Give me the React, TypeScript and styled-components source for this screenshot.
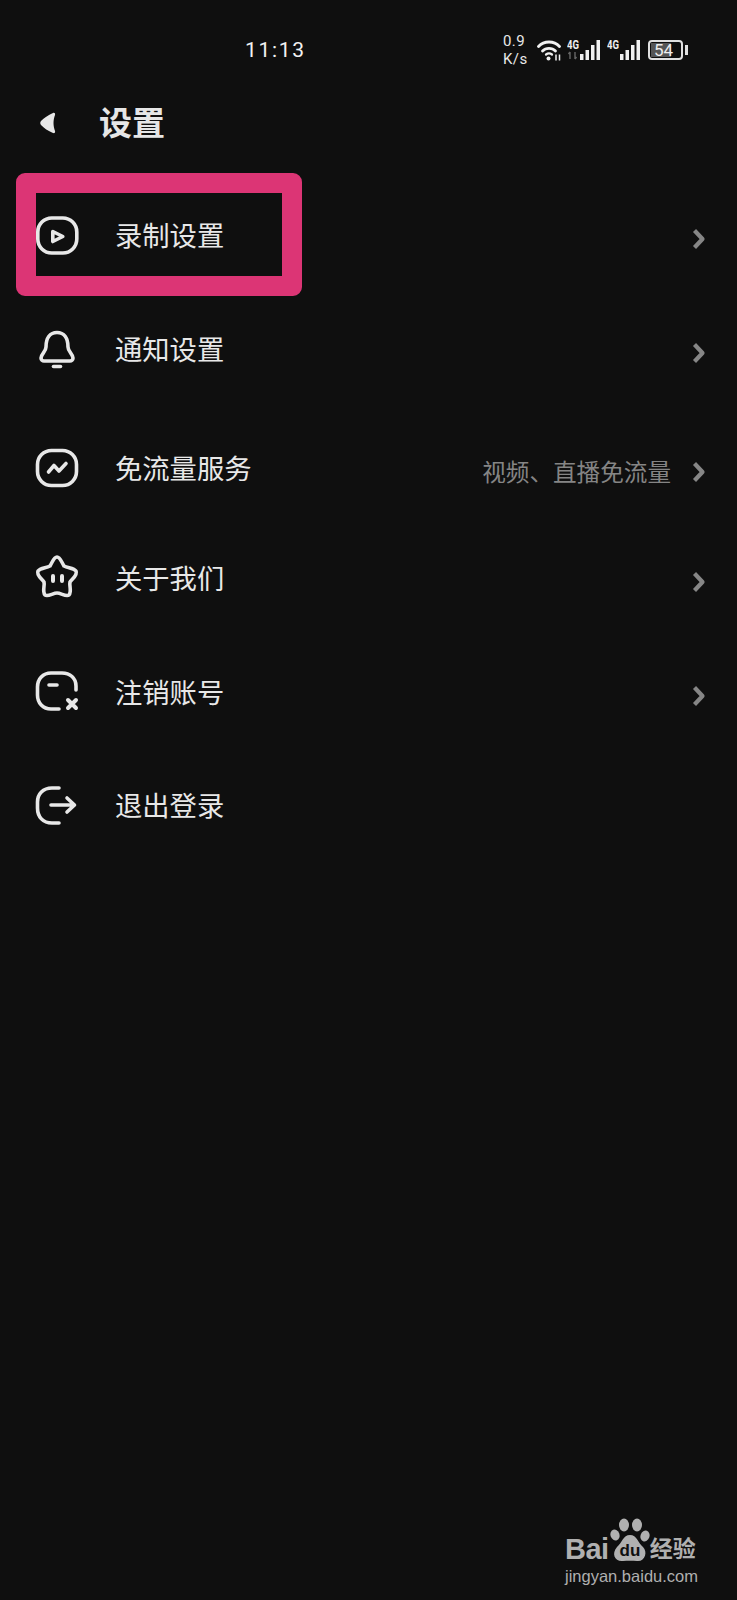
import { createGlobalStyle, styled } from 'styled-components';
import type { ReactNode } from 'react';

const GlobalStyle = createGlobalStyle`
  html, body {
    margin: 0;
    padding: 0;
    background: #0f0f0f;
  }
`;

const Page = styled.div`
  position: relative;
  width: 737px;
  height: 1600px;
  overflow: hidden;
  background: #0f0f0f;
  color: #e8e8e8;
  font-family: 'Noto Sans CJK SC', 'Noto Sans', sans-serif;
`;

// 상단 상태바
const StatusBar = styled.div`
  display: flex;
  align-items: center;
  height: 38px;
  padding: 31px 0 0 245px;
`;
const Time = styled.div`
  width: 61px;
  font-family: Roboto, sans-serif;
  font-size: 21px;
  letter-spacing: 1.7px;
  color: #f2f2f2;
`;
const Speed = styled.div`
  margin-left: 197px;
  width: 34px;
  font-family: Roboto, sans-serif;
  font-size: 15px;
  line-height: 18px;
  letter-spacing: 0.4px;
  color: #e8e8e8;
`;
const StatusIcons = styled.div`
  display: flex;
  align-items: center;
  gap: 6px;
`;
const Battery = styled.div`
  display: flex;
  align-items: center;
  margin-left: 1px;
`;
const BatteryBody = styled.div`
  box-sizing: border-box;
  width: 35px;
  height: 20px;
  padding: 1px;
  border: 2px solid #e0e0e0;
  border-radius: 4px;
`;
const BatteryLevel = styled.div`
  height: 100%;
  width: 60%;
  background: #555555;
  font-family: Roboto, sans-serif;
  font-size: 17px;
  line-height: 14px;
  white-space: nowrap;
  color: #eeeeee;
  padding-left: 3px;
`;
const BatteryNub = styled.div`
  width: 3px;
  height: 10px;
  margin-left: 2px;
  background: #e0e0e0;
`;

// 제목
const Header = styled.div`
  display: flex;
  align-items: center;
  height: 60px;
  margin-top: 24px;
  padding-left: 38px;
`;
const Title = styled.div`
  margin: 0 0 4px 41px;
  font-size: 33px;
  font-weight: 700;
  color: #e6e6e6;
`;

// 메뉴
const Menu = styled.div`
  display: flex;
  flex-direction: column;
  padding: 0 31px 0 35px;
`;
const Row = styled.div<{ $gap: number }>`
  display: flex;
  align-items: center;
  height: 60px;
  margin-top: ${(p) => p.$gap}px;
`;
const Label = styled.div`
  margin-left: 36px;
  flex: 1;
  font-size: 27.3px;
  color: #e8e8e8;
`;
const Hint = styled.div`
  margin: 8px 21px 0 0;
  font-size: 23.6px;
  color: #858585;
`;
const Highlight = styled.div`
  position: absolute;
  left: 16px;
  top: 173px;
  box-sizing: border-box;
  width: 286px;
  height: 123px;
  border: 20px solid #dc3575;
  border-radius: 9px;
`;
const RowIcon = styled.svg`
  margin-top: 5px;
  overflow: visible;
`;
const ChevronIcon = styled.svg`
  margin-top: 9px;
`;

// 워터마크
const Watermark = styled.div`
  position: absolute;
  left: 565px;
  top: 1518px;
  width: 135px;
  color: #b0b0b0;
`;
const Brand = styled.div`
  display: flex;
  align-items: flex-end;
  height: 46px;
`;
const BrandLatin = styled.div`
  font-family: 'Liberation Sans', sans-serif;
  font-size: 29px;
  font-weight: 700;
  line-height: 30px;
  letter-spacing: -0.5px;
`;
const BrandCjk = styled.div`
  margin: 0 0 2px -1px;
  font-size: 23px;
  font-weight: 700;
  line-height: 30px;
  white-space: nowrap;
`;
const Domain = styled.div`
  margin-top: 2px;
  font-family: 'Liberation Sans', sans-serif;
  font-size: 16.5px;
  line-height: 20px;
  white-space: nowrap;
`;

const Icon = ({ children }: { children: ReactNode }) => (
  <RowIcon
    width="44"
    height="44"
    viewBox="0 0 44 44"
    fill="none"
    stroke="#e8e8e8"
    strokeWidth="3.6"
    strokeLinecap="round"
    strokeLinejoin="round"
  >
    {children}
  </RowIcon>
);

const Chevron = () => (
  <ChevronIcon width="14" height="20" viewBox="0 0 14 20" fill="none">
    <path d="M2.5 1.5 L10.5 10 L2.5 18.5" stroke="#868686" strokeWidth="4.2" strokeLinejoin="round" />
  </ChevronIcon>
);

const Signal = ({ arrows }: { arrows?: boolean }) => (
  <svg width="34" height="22" viewBox="0 0 34 22">
    <text
      x="0"
      y="10"
      fontFamily="Roboto, sans-serif"
      fontSize="12"
      fontWeight="700"
      fill="#eeeeee"
      textLength="12"
      lengthAdjust="spacingAndGlyphs"
    >
      4G
    </text>
    {arrows && <path d="M3 13v7M1.5 15l1.5-2M8 13v7M9.5 18l-1.5 2" stroke="#666666" strokeWidth="1.4" fill="none" />}
    <rect x="13" y="15" width="3.5" height="6" fill="#f0f0f0" />
    <rect x="18.5" y="11" width="3.5" height="10" fill="#f0f0f0" />
    <rect x="24" y="6" width="3.5" height="15" fill="#f0f0f0" />
    <rect x="29.5" y="1" width="3.5" height="20" fill="#f0f0f0" />
  </svg>
);

const Wifi = () => (
  <svg width="24" height="22" viewBox="0 0 24 22" fill="none" stroke="#f0f0f0" strokeWidth="2.8" strokeLinecap="round">
    <path d="M1.5 7.5 C7 1.5 17 1.5 22.5 7.5" />
    <path d="M5.5 12 C9 8.4 15 8.4 18.5 12" />
    <path d="M9 15.5 C11 14 13 14 15 15.5" strokeWidth="2.2" />
    <circle cx="11.5" cy="19.5" r="2" fill="#f0f0f0" stroke="none" />
    <path d="M19 15.5v6M22.5 15.5v6" strokeWidth="1.5" strokeLinecap="butt" />
  </svg>
);

const Paw = () => (
  <svg width="42" height="46" viewBox="0 0 42 46" fill="#b0b0b0">
    <ellipse cx="6" cy="17" rx="4.5" ry="5.5" transform="rotate(-20 6 17)" />
    <ellipse cx="15" cy="7" rx="5" ry="6.5" />
    <ellipse cx="28" cy="7" rx="5" ry="6.5" />
    <ellipse cx="36" cy="18" rx="4.5" ry="5.5" transform="rotate(20 36 18)" />
    <path d="M21 17 C28 17 29 25 34 29 C39 34 36 44 28 43 C24 42.6 18 42.6 14 43 C6 44 2 36 8 29 C13 25 14 17 21 17Z" />
    <text x="21" y="38" textAnchor="middle" fontFamily="Liberation Sans, sans-serif" fontSize="17" fontWeight="700" fill="#0f0f0f">
      du
    </text>
  </svg>
);

const rows = [
  {
    label: '录制设置',
    gap: 51,
    icon: (
      <>
        <rect x="2.8" y="3" width="39" height="35" rx="14" />
        <path d="M17.8 16.5 L27.8 21.5 L17.8 26.5 Z" />
      </>
    ),
  },
  {
    label: '通知设置',
    gap: 54,
    icon: (
      <>
        <path d="M11 18 C11 9 15 3.5 22 3.5 C29 3.5 33 9 33 18 C33 23 38 25 38 29 C38 31 36.5 32 35 32 L9 32 C7.5 32 6 31 6 29 C6 25 11 23 11 18 Z" />
        <path d="M18.5 37.5 H25.5" />
      </>
    ),
  },
  {
    label: '免流量服务',
    gap: 59,
    hint: '视频、直播免流量',
    icon: (
      <>
        <rect x="2.5" y="2.5" width="39" height="35" rx="14" />
        <path d="M13.5 24 L19 17.5 L24 23 L31 15.5" />
      </>
    ),
  },
  {
    label: '关于我们',
    gap: 50,
    icon: (
      <>
        <path d="M22 -1 C25 -1 26 3 29 8 C33 10 39 10 41 13 C43 17 37 21 35 24 C34 28 37 33 34 37 C31 39 26 35 22 35 C18 35 13 39 10 37 C7 33 10 28 9 24 C7 21 1 17 3 13 C5 10 11 10 15 8 C18 3 19 -1 22 -1 Z" />
        <path d="M18 18 V23 M27 18 V23" strokeWidth="4" />
      </>
    ),
  },
  {
    label: '注销账号',
    gap: 54,
    icon: (
      <>
        <path d="M41 18 V14 C41 6 35 1 27 1 H16 C8 1 2.5 7 2.5 15 V23 C2.5 31 8 37 16 37 H24" />
        <path d="M14 13 H22" />
        <path d="M33 28 L41 36 M41 28 L33 36" strokeWidth="4" />
      </>
    ),
  },
  {
    label: '退出登录',
    gap: 53,
    icon: (
      <>
        <path d="M24 3 H17 C8 3 2.5 9 2.5 17 V23 C2.5 32 8 38 17 38 H24" />
        <path d="M16 20 H39 M32 13 L39.5 20 L32 27" />
      </>
    ),
  },
];

export default function App() {
  return (
    <Page>
      <GlobalStyle />
      <StatusBar>
        <Time>11:13</Time>
        <Speed>
          0.9
          <br />
          K/s
        </Speed>
        <StatusIcons>
          <Wifi />
          <Signal arrows />
          <Signal />
          <Battery>
            <BatteryBody>
              <BatteryLevel>54</BatteryLevel>
            </BatteryBody>
            <BatteryNub />
          </Battery>
        </StatusIcons>
      </StatusBar>
      <Header>
        <svg width="20" height="24" viewBox="0 0 20 24">
          <path d="M15 2 C16.5 1.5 17.5 2.5 17 4 C16 7 15.5 9 15.5 12 C15.5 15 16 17 17 20 C17.5 21.5 16.5 22.5 15 22 C10 20 6 17 3 14 C2 13 2 11 3 10 C6 7 10 4 15 2 Z" fill="#e8e8e8" />
        </svg>
        <Title>设置</Title>
      </Header>
      <Menu>
        {rows.map((row) => (
          <Row key={row.label} $gap={row.gap}>
            <Icon>{row.icon}</Icon>
            <Label>{row.label}</Label>
            {row.hint && <Hint>{row.hint}</Hint>}
            {row.label !== '退出登录' && <Chevron />}
          </Row>
        ))}
      </Menu>
      <Highlight />
      <Watermark>
        <Brand>
          <BrandLatin>Bai</BrandLatin>
          <Paw />
          <BrandCjk>经验</BrandCjk>
        </Brand>
        <Domain>jingyan.baidu.com</Domain>
      </Watermark>
    </Page>
  );
}
